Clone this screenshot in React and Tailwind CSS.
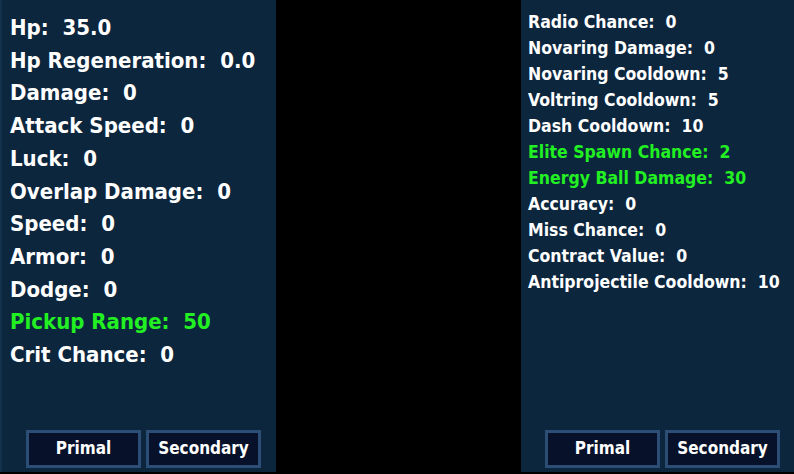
const leftStats = [
  ["Hp", "35.0"],
  ["Hp Regeneration", "0.0"],
  ["Damage", "0"],
  ["Attack Speed", "0"],
  ["Luck", "0"],
  ["Overlap Damage", "0"],
  ["Speed", "0"],
  ["Armor", "0"],
  ["Dodge", "0"],
  ["Pickup Range", "50", true],
  ["Crit Chance", "0"],
];

const rightStats = [
  ["Radio Chance", "0"],
  ["Novaring Damage", "0"],
  ["Novaring Cooldown", "5"],
  ["Voltring Cooldown", "5"],
  ["Dash Cooldown", "10"],
  ["Elite Spawn Chance", "2", true],
  ["Energy Ball Damage", "30", true],
  ["Accuracy", "0"],
  ["Miss Chance", "0"],
  ["Contract Value", "0"],
  ["Antiprojectile Cooldown", "10"],
];

function StatLine({ label, value, boosted }) {
  return (
    <div className={"whitespace-pre " + (boosted ? "text-[#22f022]" : "text-white")}>
      {label}:  {value}
    </div>
  );
}

function TabButtons() {
  return (
    <div className="flex gap-[5px]">
      <button className="w-[115px] h-[38px] border-[3px] border-[#2b4d76] bg-[#07122a] text-white text-[17px] font-bold">
        Primal
      </button>
      <button className="w-[115px] h-[38px] border-[3px] border-[#2b4d76] bg-[#07122a] text-white text-[17px] font-bold">
        Secondary
      </button>
    </div>
  );
}

export default function App() {
  return (
    <div
      className="flex w-[794px] h-[474px] bg-black"
      style={{ fontFamily: "'DejaVu Sans Condensed', 'DejaVu Sans', sans-serif" }}
    >
      {/* main stats */}
      <div className="flex flex-col w-[276px] h-[472px] bg-[#0c263e] border-l-2 border-[#13314b]">
        <div className="pt-[12px] pl-[8px] text-[22px] leading-[32.7px] font-bold">
          {leftStats.map(([label, value, boosted]) => (
            <StatLine key={label} label={label} value={value} boosted={boosted} />
          ))}
        </div>
        <div className="mt-auto pl-[24px] pb-[4px]">
          <TabButtons />
        </div>
      </div>

      {/* extra stats */}
      <div className="ml-auto flex flex-col w-[273px] h-[472px] bg-[#0c263e]">
        <div className="pt-[9px] pl-[7px] text-[17.5px] leading-[26px] font-bold">
          {rightStats.map(([label, value, boosted]) => (
            <StatLine key={label} label={label} value={value} boosted={boosted} />
          ))}
        </div>
        <div className="mt-auto pl-[24px] pb-[4px]">
          <TabButtons />
        </div>
      </div>
    </div>
  );
}
